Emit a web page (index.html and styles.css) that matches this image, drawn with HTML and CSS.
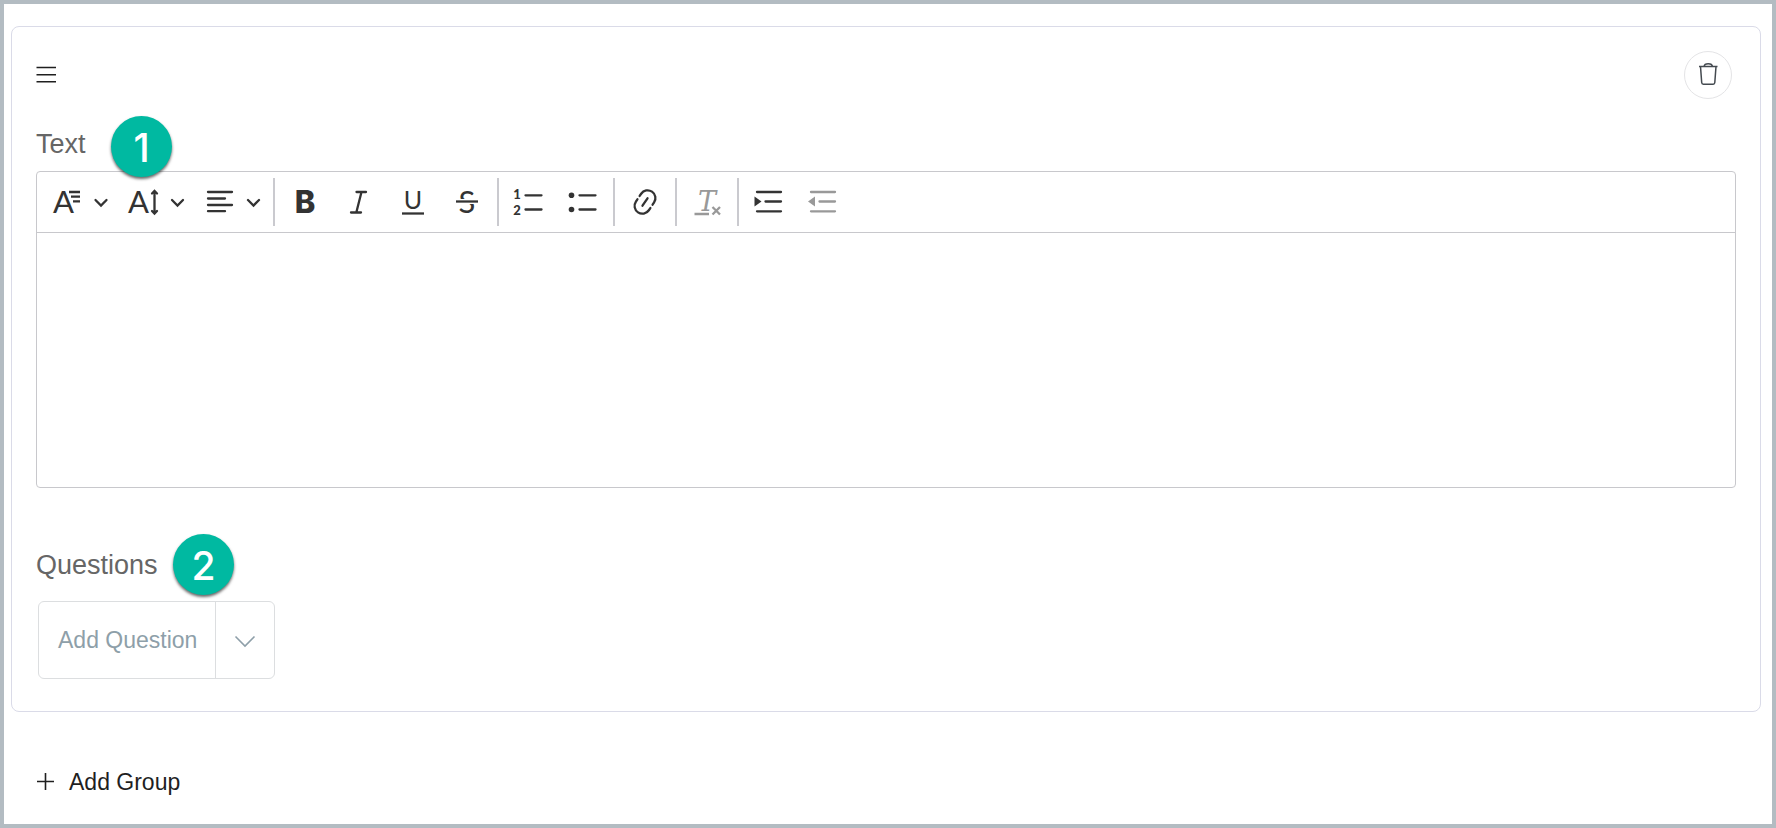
FILE: index.html
```html
<!DOCTYPE html>
<html lang="en">
<head>
<meta charset="utf-8">
<meta name="viewport" content="width=device-width, initial-scale=1">
<title>Question group</title>
<link rel="stylesheet" href="styles.css">
</head>
<body>
<main class="page">
  <section class="card">
    <header class="card-header">
      <button class="plain-button" type="button" aria-label="Reorder group">
        <svg class="icon-small" viewBox="0 0 20 20" aria-hidden="true"><path d="M.5 2.500H20M.5 9.700H20M.5 16.700H20"/></svg>
      </button>
      <button class="delete-button" type="button" aria-label="Delete group">
        <svg class="icon-trash" viewBox="0 0 24 24" aria-hidden="true"><path d="M3 3.500H21.500M8 3.500C8.500 -.2 16 -.2 16.500 3.500M4.500 3.500L5.700 19.500Q5.800 21.200 7.300 21.200H17.200Q18.700 21.200 18.800 19.500L20 3.500"/></svg>
      </button>
    </header>

    <div class="field-label field-label-text">
      <label for="group-text">Text</label>
      <span class="badge badge-text">1</span>
    </div>
    <div class="editor">
      <div class="toolbar" role="toolbar" aria-label="Text formatting">
        <button class="tool-menu" type="button" aria-label="Font family">
          <svg class="icon" viewBox="0 0 28 28" aria-hidden="true"><text class="glyph-a" x="0" y="25">A</text><path class="knockout" d="M15.500 4H28M17.500 8.700H28M19.500 13.300H28"/><path class="stroke-flat" d="M16 4H27M18 8.700H27M20 13.300H27"/></svg>
          <svg class="icon-caret" viewBox="0 0 14 28" aria-hidden="true"><path d="M1.500 12L7 17.500L12.500 12"/></svg>
        </button>
        <button class="tool-menu" type="button" aria-label="Font size">
          <svg class="icon" viewBox="0 0 28 28" aria-hidden="true"><text class="glyph-a" x="-1" y="25">A</text><path d="M25.500 3.500V25M23 5.500L25.500 3L28 5.500M23 23L25.500 25.500L28 23"/></svg>
          <svg class="icon-caret" viewBox="0 0 14 28" aria-hidden="true"><path d="M2 12L7.500 17.500L13 12"/></svg>
        </button>
        <button class="tool-menu" type="button" aria-label="Text alignment">
          <svg class="icon" viewBox="0 0 28 28" aria-hidden="true"><path d="M3 4H27M3 10.500H20M3 17H27M3 23.200H20"/></svg>
          <svg class="icon-caret" viewBox="0 0 14 28" aria-hidden="true"><path d="M2 12L7.500 17.500L13 12"/></svg>
        </button>
        <span class="separator"></span>
        <button class="tool" type="button" aria-label="Bold">
          <svg class="icon" viewBox="0 0 28 28" aria-hidden="true"><text class="glyph-b" x="14" y="25">B</text></svg>
        </button>
        <button class="tool" type="button" aria-label="Italic">
          <svg class="icon" viewBox="0 0 28 28" aria-hidden="true"><path d="M11.500 4H21M6 24.500H16M16.500 4L11.300 24.500"/></svg>
        </button>
        <button class="tool" type="button" aria-label="Underline">
          <svg class="icon" viewBox="0 0 28 28" aria-hidden="true"><text class="glyph-u" x="14" y="21">U</text><path class="stroke-flat" d="M3 25.500H25"/></svg>
        </button>
        <button class="tool" type="button" aria-label="Strikethrough">
          <svg class="icon" viewBox="0 0 28 28" aria-hidden="true"><text class="glyph-s" x="14" y="25">S</text><path class="knockout" d="M3 13.500H25"/><path class="stroke-flat" d="M3 13.500H25"/></svg>
        </button>
        <span class="separator"></span>
        <button class="tool" type="button" aria-label="Numbered list">
          <svg class="icon" viewBox="0 0 28 28" aria-hidden="true"><text class="glyph-number" x="2" y="11">1</text><text class="glyph-number" x="2" y="27">2</text><path d="M10.500 7.300H26.500M10.500 21.500H26.500"/></svg>
        </button>
        <button class="tool" type="button" aria-label="Bulleted list">
          <svg class="icon" viewBox="0 0 28 28" aria-hidden="true"><circle class="fill" cx="2.500" cy="7.300" r="2.800"/><circle class="fill" cx="2.500" cy="21.500" r="2.800"/><path d="M10.500 7.300H26.500M10.500 21.500H26.500"/></svg>
        </button>
        <span class="separator"></span>
        <button class="tool" type="button" aria-label="Link">
          <svg class="icon" viewBox="0 0 28 28" aria-hidden="true"><g transform="translate(14 14) rotate(34)"><path d="M-7.800 -2V-4.700A7.800 7.800 0 0 1 7.800 -4.700V-2M-7.800 2V4.700A7.800 7.800 0 0 0 7.800 4.700V2M0 -4.500V4.500"/></g></svg>
        </button>
        <span class="separator"></span>
        <button class="tool" type="button" aria-label="Remove formatting" disabled>
          <svg class="icon" viewBox="0 0 28 28" aria-hidden="true"><text class="glyph-t" x="14" y="23">T</text><path class="stroke-flat" d="M1.500 26H16M19.500 19L27 26.500M27 19L19.500 26.500"/></svg>
        </button>
        <span class="separator"></span>
        <button class="tool" type="button" aria-label="Increase indent">
          <svg class="icon" viewBox="0 0 28 28" aria-hidden="true"><path d="M2 4H26M10.500 13.500H26M2 23.300H26"/><path class="fill" d="M-.5 8.500L6.500 13.500L-.5 18.500Z"/></svg>
        </button>
        <button class="tool" type="button" aria-label="Decrease indent" disabled>
          <svg class="icon" viewBox="0 0 28 28" aria-hidden="true"><path d="M2 4H26M10.500 13.500H26M2 23.300H26"/><path class="fill" d="M6 8.500L-1 13.500L6 18.500Z"/></svg>
        </button>
      </div>
      <textarea class="editor-body" id="group-text"></textarea>
    </div>

    <div class="field-label field-label-questions">
      <span>Questions</span>
      <span class="badge badge-questions">2</span>
    </div>
    <div class="split-button">
      <button class="split-main" type="button">Add Question</button>
      <button class="split-toggle" type="button" aria-label="Question types">
        <svg class="icon-small" viewBox="0 0 20 20" aria-hidden="true"><path d="M.5 6.500L10 16L19.500 6.500"/></svg>
      </button>
    </div>
  </section>

  <button class="plain-button add-group" type="button">
    <svg class="icon-small" viewBox="0 0 20 20" aria-hidden="true"><path d="M9.500 1V18M1 9.500H18"/></svg>
    <span>Add Group</span>
  </button>
</main>
</body>
</html>
```
FILE: styles.css
```css
* {
  box-sizing: border-box;
}

body {
  margin: 0;
  font-family: "Liberation Sans", Arial, sans-serif;
  font-size: 23px;
  color: #1f1f1f;
  background: #fff;
}

button {
  padding: 0;
  border: 0;
  background: none;
  color: inherit;
  font: inherit;
  cursor: pointer;
}

svg {
  display: block;
  flex: none;
  overflow: visible;
  fill: none;
  stroke: currentColor;
}

.page {
  min-height: 100vh;
  padding: 22px 11px 22px 7px;
  border: 4px solid #b3bcc2;
}

.card {
  padding: 24px 24px 32px;
  border: 1px solid #dadbe8;
  border-radius: 8px;
}

.card-header {
  display: flex;
  align-items: center;
  justify-content: space-between;
  padding-right: 4px;
}

.plain-button {
  display: flex;
  align-items: center;
}

.icon-small {
  width: 20px;
  height: 20px;
  stroke-width: 1.6;
}

.delete-button {
  display: grid;
  place-items: center;
  width: 48px;
  height: 48px;
  border: 1px solid #e4e4e6;
  border-radius: 50%;
  color: #444a50;
}

.icon-trash {
  width: 24px;
  height: 24px;
  stroke-width: 1.5;
}

.field-label {
  position: relative;
  font-size: 27px;
  line-height: 30px;
  color: #666;
}

.field-label-text {
  margin: 30px 0 12px;
}

.field-label-questions {
  margin: 62px 0 21px;
}

.badge {
  position: absolute;
  display: grid;
  place-items: center;
  width: 61px;
  height: 61px;
  padding-top: 2px;
  border-radius: 50%;
  background: #00b9a1;
  box-shadow: 0 2px 3px rgba(0, 0, 0, 0.6);
  color: #fff;
  font-family: Inter, sans-serif;
  font-size: 39px;
  font-weight: 500;
}

.badge-text {
  top: -13px;
  left: 75px;
}

.badge-questions {
  top: -16px;
  left: 137px;
}

.editor {
  border: 1px solid #c8c8cc;
  border-radius: 4px;
}

.toolbar {
  display: flex;
  align-items: center;
  height: 61px;
  padding-left: 5px;
  border-bottom: 1px solid #c8c8cc;
  color: #333;
}

.tool,
.tool-menu {
  display: flex;
  align-items: center;
  height: 48px;
}

.tool {
  justify-content: center;
  width: 54px;
}

.tool:disabled {
  color: #999;
}

.tool-menu {
  gap: 13px;
  width: 76px;
  padding-left: 11px;
}

.separator {
  width: 2px;
  height: 48px;
  margin: 0 3px;
  background: #cacacf;
}

.icon,
.icon-caret {
  height: 28px;
  stroke-width: 2.3;
  stroke-linecap: round;
}

.icon {
  width: 28px;
}

.icon-caret {
  width: 14px;
}

.icon text {
  fill: currentColor;
  stroke: none;
  text-anchor: middle;
}

.icon .glyph-a {
  font-family: Lato, sans-serif;
  font-size: 31px;
  text-anchor: start;
}

.icon .glyph-b {
  font-family: Inter, sans-serif;
  font-size: 31px;
  font-weight: 800;
}

.icon .glyph-u {
  font-family: Lato, sans-serif;
  font-size: 25px;
}

.icon .glyph-s {
  font-family: Lato, sans-serif;
  font-size: 31px;
}

.icon .glyph-number {
  font-family: Lato, sans-serif;
  font-size: 13px;
  font-weight: 900;
}

.icon .glyph-t {
  font-family: "DejaVu Serif", serif;
  font-size: 27px;
  font-style: italic;
}

.icon .fill {
  fill: currentColor;
  stroke: none;
}

.icon .knockout {
  stroke: #fff;
  stroke-width: 5;
  stroke-linecap: butt;
}

.icon .stroke-flat {
  stroke-linecap: butt;
}

.editor-body {
  display: block;
  width: 100%;
  height: 254px;
  padding: 16px;
  border: 0;
  border-radius: 4px;
  background: none;
  font: inherit;
  resize: none;
}

.split-button {
  display: inline-flex;
  height: 78px;
  margin-left: 2px;
  border: 1px solid #dcdee0;
  border-radius: 6px;
  color: #8e9fa9;
  vertical-align: top;
}

.split-main {
  padding: 0 18px 0 19px;
}

.split-toggle {
  display: grid;
  place-items: center;
  width: 59px;
  border-left: 1px solid #dcdee0;
}

.add-group {
  gap: 13px;
  margin: 57px 0 0 25px;
  line-height: 26px;
}
```
